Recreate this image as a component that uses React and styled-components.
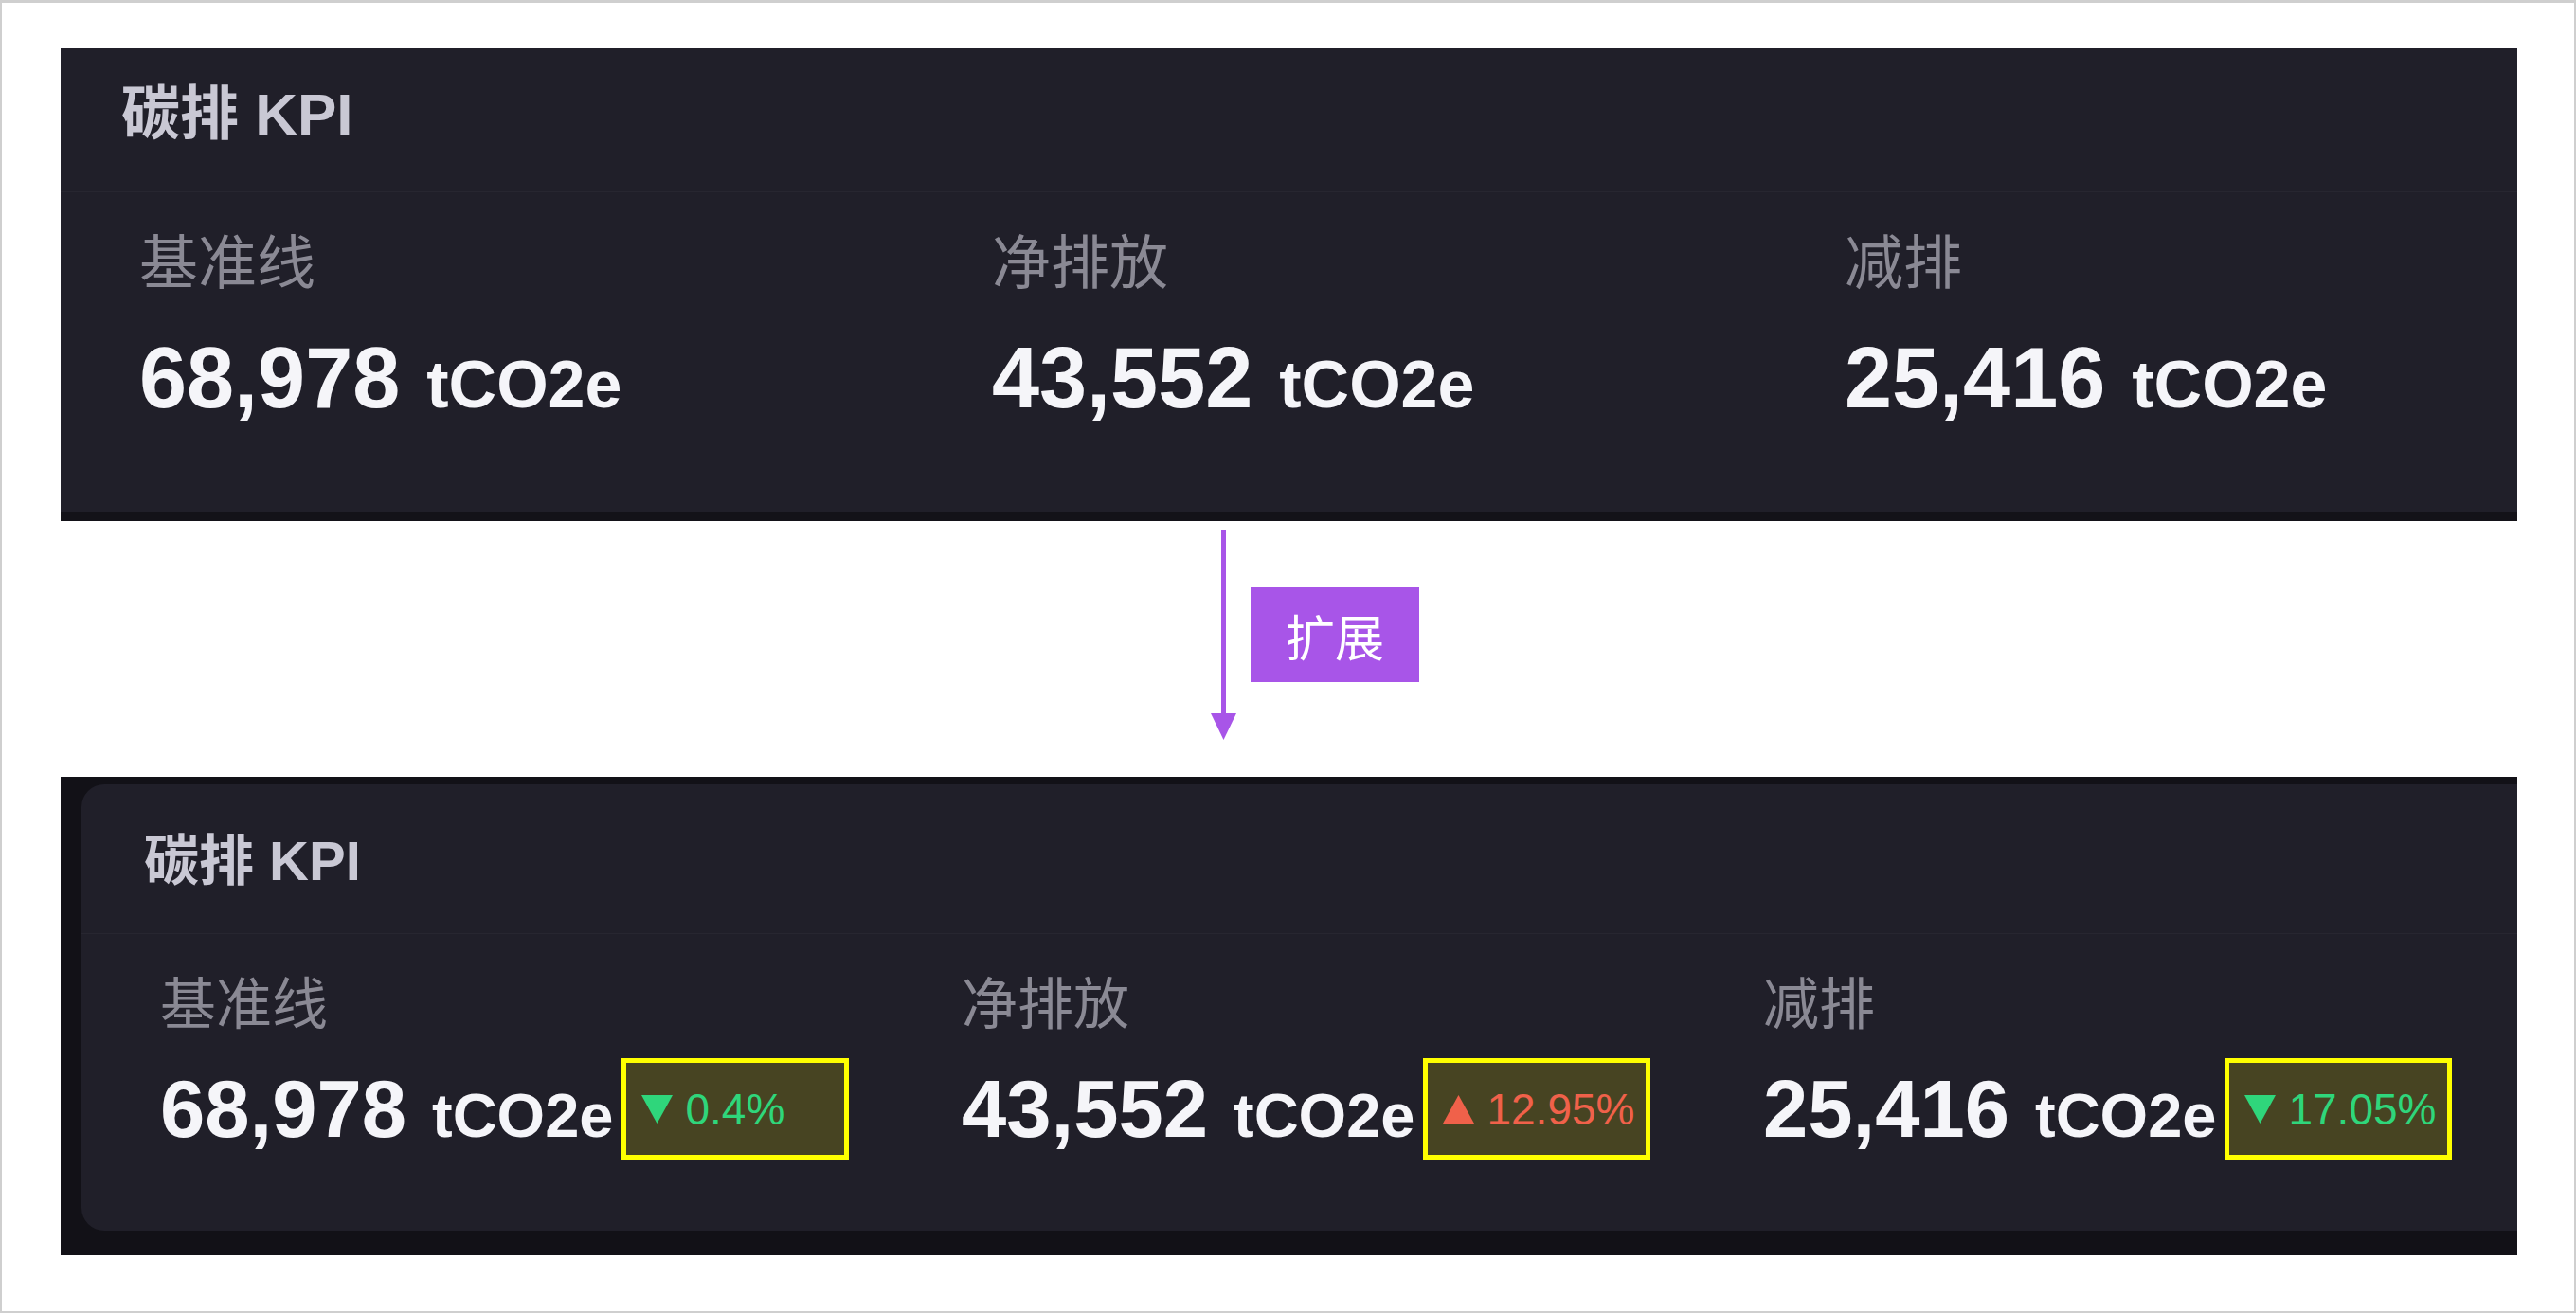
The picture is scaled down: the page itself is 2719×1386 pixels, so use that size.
import React from 'react';
import styled, { createGlobalStyle } from 'styled-components';

const GlobalStyle = createGlobalStyle`
  html, body {
    margin: 0;
    padding: 0;
    background: #ffffff;
  }
  body {
    font-family: "Liberation Sans", "Noto Sans CJK SC", sans-serif;
  }
`;

// two sizes of the same card: the plain one and the one with deltas
const sizes = {
  plain: {
    headerHeight: 152,
    headerTop: 33,
    headerPadLeft: 64,
    titleSize: 62,
    bodyTop: 39,
    bodyBottom: 96,
    columnWidth: 900,
    labelSize: 62,
    valueGap: 38,
    numberSize: 90,
    unitSize: 70,
    unitGap: 28,
  },
  delta: {
    headerHeight: 158,
    headerTop: 46,
    headerPadLeft: 66,
    titleSize: 58,
    bodyTop: 40,
    bodyBottom: 75,
    columnWidth: 846,
    labelSize: 59,
    valueGap: 20,
    numberSize: 85,
    unitSize: 65,
    unitGap: 27,
  },
};

const Frame = styled.div`
  width: 2719px;
  height: 1386px;
  box-sizing: border-box;
  border: 2px solid #cfcfcf;
  border-top-width: 3px;
  background: #ffffff;
  padding: 48px 0 0 62px;
  display: flex;
  flex-direction: column;
  overflow: hidden;
`;

const PlainPanel = styled.section`
  width: 2593px;
  background: #201f29;
  border-bottom: 10px solid #131218;
  overflow: hidden;
`;

const Backdrop = styled.section`
  width: 2593px;
  box-sizing: border-box;
  background: #121117;
  padding: 8px 0 26px 22px;
  overflow: hidden;
`;

const RoundCard = styled.div`
  background: #201f29;
  border-radius: 24px 0 0 24px;
`;

const Header = styled.div`
  height: ${p => p.$s.headerHeight}px;
  box-sizing: border-box;
  padding: ${p => p.$s.headerTop}px 0 0 ${p => p.$s.headerPadLeft}px;
  border-bottom: 1px solid rgba(255, 255, 255, 0.035);
`;

const Title = styled.h2`
  margin: 0;
  font-size: ${p => p.$s.titleSize}px;
  line-height: 1.2;
  font-weight: 700;
  color: #c9c8d4;
`;

const Body = styled.div`
  display: flex;
  padding: ${p => p.$s.bodyTop}px 0 ${p => p.$s.bodyBottom}px 83px;
`;

const Column = styled.div`
  flex: 0 0 ${p => p.$s.columnWidth}px;
  display: flex;
  flex-direction: column;
`;

const Label = styled.div`
  font-size: ${p => p.$s.labelSize}px;
  line-height: 1.2;
  font-weight: 400;
  color: #8a8994;
`;

const ValueRow = styled.div`
  display: flex;
  align-items: center;
  gap: 9px;
  margin-top: ${p => p.$s.valueGap}px;
`;

const Amount = styled.div`
  display: flex;
  align-items: baseline;
  gap: ${p => p.$s.unitGap}px;
  color: #f5f5f9;
  font-weight: 700;
  line-height: 1;
  white-space: nowrap;
`;

const Number = styled.span`
  font-size: ${p => p.$s.numberSize}px;
`;

const Unit = styled.span`
  font-size: ${p => p.$s.unitSize}px;
`;

const DeltaBadge = styled.div`
  width: 240px;
  height: 107px;
  box-sizing: border-box;
  border: 5px solid #ffff00;
  background: #474422;
  display: flex;
  align-items: center;
  gap: 13px;
  padding-left: 16px;
  color: ${p => (p.$up ? '#f0614a' : '#2fd67b')};
  font-size: 46px;
  line-height: 1;
  white-space: nowrap;
`;

const Glyph = styled.svg`
  flex: none;
  display: block;
`;

const Connector = styled.div`
  display: flex;
  align-items: center;
  gap: 15px;
  padding: 9px 0 39px 1214px;
`;

const Tag = styled.div`
  width: 178px;
  height: 100px;
  background: #a855e8;
  color: #ffffff;
  font-size: 52px;
  font-family: "Noto Sans CJK SC", sans-serif;
  display: flex;
  align-items: center;
  justify-content: center;
`;

const kpis = [
  { label: '基准线', value: '68,978', delta: '0.4%', up: false },
  { label: '净排放', value: '43,552', delta: '12.95%', up: true },
  { label: '减排', value: '25,416', delta: '17.05%', up: false },
];

const Triangle = ({ up }) => (
  <Glyph width="33" height="30" viewBox="0 0 33 30">
    <polygon
      points={up ? '16.5,0 33,30 0,30' : '0,0 33,0 16.5,30'}
      fill="currentColor"
    />
  </Glyph>
);

const KpiContent = ({ s, showDelta }) => (
  <>
    <Header $s={s}>
      <Title $s={s}>碳排 KPI</Title>
    </Header>
    <Body $s={s}>
      {kpis.map(kpi => (
        <Column key={kpi.label} $s={s}>
          <Label $s={s}>{kpi.label}</Label>
          <ValueRow $s={s}>
            <Amount $s={s}>
              <Number $s={s}>{kpi.value}</Number>
              <Unit $s={s}>tCO2e</Unit>
            </Amount>
            {showDelta && (
              <DeltaBadge $up={kpi.up}>
                <Triangle up={kpi.up} />
                <span>{kpi.delta}</span>
              </DeltaBadge>
            )}
          </ValueRow>
        </Column>
      ))}
    </Body>
  </>
);

const DownArrow = () => (
  <Glyph width="27" height="222" viewBox="0 0 27 222">
    <rect x="11" y="0" width="5" height="196" fill="#a855e8" />
    <polygon points="0,194 27,194 13.5,222" fill="#a855e8" />
  </Glyph>
);

const App = () => (
  <>
    <GlobalStyle />
    <Frame>
      <PlainPanel>
        <KpiContent s={sizes.plain} />
      </PlainPanel>

      <Connector>
        <DownArrow />
        <Tag>扩展</Tag>
      </Connector>

      <Backdrop>
        <RoundCard>
          <KpiContent s={sizes.delta} showDelta />
        </RoundCard>
      </Backdrop>
    </Frame>
  </>
);

export default App;
